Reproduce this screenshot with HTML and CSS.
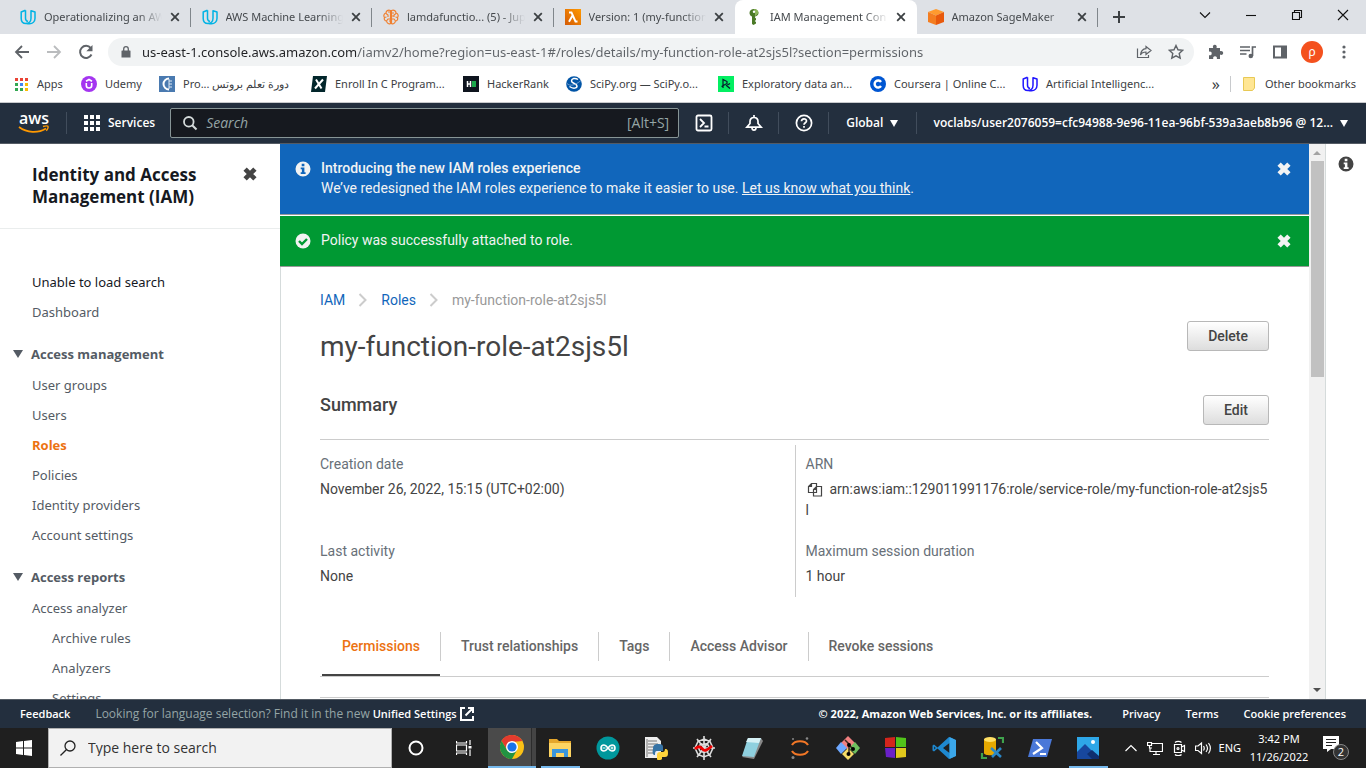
FILE: index.html
```html
<!DOCTYPE html>
<html lang="en">
<head>
<meta charset="utf-8">
<meta name="viewport" content="width=device-width, initial-scale=1">
<title>IAM Management Console</title>
<link rel="stylesheet" href="styles.css">
</head>
<body>
<svg class="defs" aria-hidden="true">
  <symbol id="x-thin" viewBox="0 0 10 10"><path d="M1.2 1.2l7.6 7.6M8.8 1.2L1.2 8.8" stroke="currentColor" stroke-width="1.8" fill="none"/></symbol>
  <symbol id="x-heavy" viewBox="0 0 12 12"><path d="M1.8 1.8l8.4 8.4M10.2 1.8l-8.4 8.4" stroke="currentColor" stroke-width="4" fill="none"/></symbol>
  <symbol id="udacity" viewBox="0 0 16 16"><path d="M5.500 1.200L1.200 3v6.500c0 3 2 5 4.800 5 3 0 5-2.200 5-5.200V1.800l4 1.200v6.200c0 3.300-2.500 5.500-5.500 5.500-1.200 0-2.500-.200-3.500-.500M5.500 1.200v8c0 1.500.800 2.800 2.500 3.300" fill="none" stroke="currentColor" stroke-width="1.500" stroke-linejoin="round"/></symbol>
  <symbol id="info" viewBox="0 0 16 16"><path fill="currentColor" fill-rule="evenodd" d="M8 .500a7.500 7.500 0 1 0 0 15 7.500 7.500 0 0 0 0-15zM6.700 2.800h2.700v2.400H6.700zM5.700 6.500h3.700v4.700h1.200V13H5.700v-1.800h1.200V8.200H5.700z"/></symbol>
  <symbol id="chev" viewBox="0 0 10 16"><path d="M1.500 2l6 6-6 6" fill="none" stroke="#ccc" stroke-width="2"/></symbol>
</svg>

<header class="tabstrip">
  <div class="tabs" role="tablist">
    <div class="tab" role="tab"><svg class="i16 cyan"><use href="#udacity"/></svg><span class="tab-title">Operationalizing an AWS</span><button class="tab-x" aria-label="Close tab"><svg><use href="#x-thin"/></svg></button></div>
    <div class="tab" role="tab"><svg class="i16 cyan"><use href="#udacity"/></svg><span class="tab-title">AWS Machine Learning</span><button class="tab-x" aria-label="Close tab"><svg><use href="#x-thin"/></svg></button></div>
    <div class="tab" role="tab"><svg class="i16" viewBox="0 0 16 16" fill="none" stroke="#f08030" stroke-width="1.200"><path d="M7.500 1.500C5 .500 3 2 3 4 .800 4.500.300 7 1.500 8.500.800 10.500 2 12 3.500 12c.500 2.500 2.500 3.500 4 2.500zM8.500 1.500C11 .500 13 2 13 4c2.200.500 2.700 3 1.500 4.500.700 2-.500 3.500-2 3.500-.500 2.500-2.500 3.500-4 2.500zM3 4.500l2 1.500v2M1.500 8.500l2-.500M3.500 12l1.500-2h2.500M5 3h2M13 4.500L11 6v2M14.500 8.500l-2-.500M12.500 12L11 10H8.500M9 4h2M6 12h1.500M8.500 7h2"/></svg><span class="tab-title">lamdafunctio... (5) - Jup</span><button class="tab-x" aria-label="Close tab"><svg><use href="#x-thin"/></svg></button></div>
    <div class="tab last" role="tab"><svg class="i16" viewBox="0 0 16 16"><defs><linearGradient id="lg" x1="0" y1="1" x2="1" y2="0"><stop offset="0" stop-color="#d45b07"/><stop offset="1" stop-color="#ff9900"/></linearGradient></defs><path fill="url(#lg)" d="M0 0h16v16H0z"/><path d="M4 3.500h2.500l4 9h2M7.500 6.500L4 12.800" fill="none" stroke="#fff" stroke-width="1.900"/></svg><span class="tab-title">Version: 1 (my-function</span><button class="tab-x" aria-label="Close tab"><svg><use href="#x-thin"/></svg></button></div>
    <div class="tab active" role="tab" aria-selected="true"><svg class="i16" viewBox="0 0 16 16"><path fill="#4b7a27" d="M8 0C5.500 0 3.500 1.500 3.500 4c0 1.500 1 3 2.500 3.500V15l1.500 1L10 14.500v-1.500L8.700 12 10 11V9.500l-1-1v-1C11 7 12.500 6 12.500 4S10.500 0 8 0z"/><path fill="#8cb65a" d="M8 0c2.500 0 4.500 1.500 4.500 4L9 7.500V3z"/><circle cx="8" cy="2.700" r="1.200" fill="#fff"/></svg><span class="tab-title">IAM Management Con</span><button class="tab-x" aria-label="Close tab"><svg><use href="#x-thin"/></svg></button></div>
    <div class="tab" role="tab"><svg class="i16" viewBox="0 0 16 16"><path fill="#ff9a2e" d="M8 0l8 3-8 3.500L0 3z"/><path fill="#f47d20" d="M0 3l8 3.500V16l-8-3z"/><path fill="#e8590c" d="M16 3L8 6.500V16l8-3z"/></svg><span class="tab-title">Amazon SageMaker</span><button class="tab-x" aria-label="Close tab"><svg><use href="#x-thin"/></svg></button></div>
  </div>
  <div class="window-side">
    <button class="new-tab" aria-label="New tab"><svg class="i16" viewBox="0 0 16 16"><path d="M8 2v12M2 8h12" stroke="#3c4043" stroke-width="2"/></svg></button>
    <div class="window-controls">
      <button aria-label="Search tabs"><svg class="i12" viewBox="0 0 12 12"><path d="M1 3.500l5 5 5-5"/></svg></button>
      <button aria-label="Minimize"><svg class="i12" viewBox="0 0 12 12"><path d="M1 6.500h10"/></svg></button>
      <button aria-label="Restore"><svg class="i12" viewBox="0 0 12 12"><path d="M1.500 3.500h7v7h-7zM3.500 3.500v-2h7v7h-2"/></svg></button>
      <button aria-label="Close"><svg class="i12" viewBox="0 0 12 12"><path d="M1 1l10 10M11 1L1 11"/></svg></button>
    </div>
  </div>
</header>

<div class="toolbar">
  <button aria-label="Back"><svg class="i16" viewBox="0 0 16 16"><path d="M15 8H2M8 2L2 8l6 6" fill="none" stroke="#5f6368" stroke-width="1.800"/></svg></button>
  <button aria-label="Forward"><svg class="i16" viewBox="0 0 16 16"><path d="M1 8h13M8 2l6 6-6 6" fill="none" stroke="#babcbe" stroke-width="1.800"/></svg></button>
  <button aria-label="Reload"><svg class="i16" viewBox="0 0 16 16"><path d="M13.500 10.500a6 6 0 1 1-.800-6.500" fill="none" stroke="#5f6368" stroke-width="2"/><path d="M14.500 1v6.200H8.300z" fill="#5f6368"/></svg></button>
  <div class="omnibox">
    <svg class="i12" viewBox="0 0 12 12"><path d="M2 4.500h8a.500.500 0 0 1 .500.500v6.500h-9V5a.500.500 0 0 1 .500-.500z" fill="#5f6368"/><path d="M3.700 5V3a2.300 2.300 0 0 1 4.600 0v2" fill="none" stroke="#5f6368" stroke-width="1.300"/></svg>
    <input class="url" aria-label="Address" value="us-east-1.console.aws.amazon.com/iamv2/home?region=us-east-1#/roles/details/my-function-role-at2sjs5l?section=permissions">
    <button aria-label="Share"><svg class="i16" viewBox="0 0 16 16" fill="none" stroke="#5f6368" stroke-width="1.200"><path d="M1.500 4.500v9h11v-2.500M10 2.500l5 4-5 4V8C7.500 8 5.500 9 4.500 11c.300-3 2-6 5.500-6.300z"/></svg></button>
    <button aria-label="Bookmark"><svg class="i16" viewBox="0 0 16 16"><path d="M8 1.500l2 4.300 4.700.500-3.500 3.200 1 4.700L8 11.800l-4.200 2.400 1-4.700L1.300 6.300 6 5.800z" fill="none" stroke="#5f6368" stroke-width="1.400"/></svg></button>
  </div>
  <button aria-label="Extensions"><svg class="i16" viewBox="0 0 16 16"><path d="M1 4h4.200c-.800-1.500 0-3.200 1.600-3.200S9.200 2.500 8.500 4H12v3.300c1.500-.700 3.200 0 3.200 1.700s-1.700 2.300-3.200 1.600V15H8.800c.600-1.400-.300-2.700-1.800-2.700S4.700 13.600 5.300 15H1v-3.800c1.500.500 2.700-.400 2.700-1.800S2.500 7.200 1 7.800z" fill="#5f6368"/></svg></button>
  <button aria-label="Media"><svg class="i16" viewBox="0 0 16 16"><path d="M0 3h10M0 6.500h10M0 10h6.500M12.500 12V3H16" fill="none" stroke="#5f6368" stroke-width="1.700"/><circle cx="10.800" cy="12" r="2.300" fill="#5f6368"/></svg></button>
  <button aria-label="Side panel"><svg class="i16" viewBox="0 0 16 16"><path d="M1 1.500h14v13H1zM3 3.500v9h6v-9z" fill="#5f6368" fill-rule="evenodd"/></svg></button>
  <button class="avatar" aria-label="Profile">ρ</button>
  <button aria-label="Menu"><svg class="i16" viewBox="0 0 16 16" fill="#5f6368"><circle cx="8" cy="3" r="1.600"/><circle cx="8" cy="8" r="1.600"/><circle cx="8" cy="13" r="1.600"/></svg></button>
</div>

<nav class="bookmarks" aria-label="Bookmarks">
  <a href="#" class="bm apps"><svg class="i16" viewBox="0 0 16 16"><path fill="#ea4335" d="M2 2h3v3H2zM7 2h3v3H7zM12 2h3v3h-3z"/><path fill="#34a853" d="M2 7h3v3H2zM2 12h3v3H2z"/><path fill="#4285f4" d="M7 7h3v3H7z"/><path fill="#34a853" d="M7 12h3v3H7z"/><path fill="#fbbc04" d="M12 7h3v3h-3zM12 12h3v3h-3z"/></svg><span>Apps</span></a>
  <a href="#" class="bm udemy"><svg class="i16" viewBox="0 0 16 16"><circle cx="8" cy="8" r="8" fill="#a435f0"/><path d="M5.300 7v2.500a2.700 2.500 0 0 0 5.400 0V7M5 5.300L8 3.500l3 1.800" fill="none" stroke="#fff" stroke-width="1.600"/></svg><span>Udemy</span></a>
  <a href="#" class="bm"><svg class="i16" viewBox="0 0 16 16"><path fill="#4a7ab0" d="M0 0h16v16H0z"/><path d="M10 2.500a5.500 5.500 0 1 0 0 11" fill="none" stroke="#fff" stroke-width="2"/><path d="M10 3v10M10 5h3M10 8h3M10 11h3" stroke="#dbe7f3"/></svg><span dir="ltr">Pro... دورة تعلم بروتس</span></a>
  <a href="#" class="bm"><svg class="i16" viewBox="0 0 16 16"><path fill="#02262b" d="M2 0h14l-2 16H0z"/><path d="M5 3.500l5.500 9M12 3.500l-8 9" stroke="#fff" stroke-width="2"/></svg><span>Enroll In C Program...</span></a>
  <a href="#" class="bm short"><svg class="i16" viewBox="0 0 16 16"><path fill="#0e141e" d="M0 0h16v16H0z"/><path d="M4.500 5v6M7.500 5v6M4.500 8h3" stroke="#fff" stroke-width="1.500"/><path fill="#1ba94c" d="M9 5h4v6H9z"/></svg><span>HackerRank</span></a>
  <a href="#" class="bm"><svg class="i16" viewBox="0 0 16 16"><circle cx="8" cy="8" r="7.800" fill="#0054a6"/><path d="M12 3.500C9 1.500 5.500 2.500 5.500 5S11 7.500 11 10s-4 3-7.500.500" fill="none" stroke="#fff" stroke-width="1.500"/><path d="M1 7.500c3 3 8 2 14-3" fill="none" stroke="#8caed5" stroke-width=".8"/></svg><span>SciPy.org — SciPy.o...</span></a>
  <a href="#" class="bm"><svg class="i16" viewBox="0 0 16 16"><path fill="#03ef62" d="M0 0h16v16H0z"/><path d="M5 12V3.500l4 2v2L3.500 10.500M12 7.500l-3.500 2 3.500 3" fill="none" stroke="#05192d" stroke-width="1.200"/></svg><span>Exploratory data an...</span></a>
  <a href="#" class="bm"><svg class="i16" viewBox="0 0 16 16"><circle cx="8" cy="8" r="8" fill="#0056d2"/><path d="M11 6a3.500 3.500 0 1 0 0 4" fill="none" stroke="#fff" stroke-width="2.400"/></svg><span>Coursera | Online C...</span></a>
  <a href="#" class="bm"><svg class="i16 indigo"><use href="#udacity"/></svg><span>Artificial Intelligenc...</span></a>
  <button class="more" aria-label="More bookmarks">»</button>
  <a href="#" class="bm other"><svg class="i16" viewBox="0 0 16 16"><path d="M2.500 1.500h11v10.500l-2 2.500h-9z" fill="#ffe694" stroke="#e8c955"/></svg><span>Other bookmarks</span></a>
</nav>

<header class="aws">
  <a href="#" class="logo" aria-label="AWS home"><svg width="34" height="24" viewBox="0 0 34 24"><text x="2" y="13" class="logo-text">aws</text><path d="M2 16c8 6 19 6.500 27 1.500" fill="none" stroke="#f90" stroke-width="1.800"/><path d="M26 15.500c2-.600 4-.800 4.800-.300.600.800-.200 3-1.500 4.500" fill="none" stroke="#f90" stroke-width="1.400"/></svg></a>
  <button class="services"><svg class="i16" viewBox="0 0 16 16"><path fill="#fff" d="M0 0h4v4H0zM6 0h4v4H6zM12 0h4v4h-4zM0 6h4v4H0zM6 6h4v4H6zM12 6h4v4h-4zM0 12h4v4H0zM6 12h4v4H6zM12 12h4v4h-4z"/></svg>Services</button>
  <label class="aws-search"><svg class="i16" viewBox="0 0 16 16"><circle cx="6.800" cy="6.800" r="4.800" fill="none" stroke="#d5dbdb" stroke-width="1.800"/><path d="M10.200 10.200l4.300 4.300" stroke="#d5dbdb" stroke-width="2"/></svg><input type="search" placeholder="Search" aria-label="Search"><span>[Alt+S]</span></label>
  <div class="aws-icons">
    <button aria-label="CloudShell"><svg class="i18" viewBox="0 0 18 18" fill="none" stroke="#fff" stroke-width="1.800"><rect x="1.500" y="1.500" width="15" height="15" rx="1.500"/><path d="M5 5l4 4-4 4M9.500 12.500h4"/></svg></button>
    <button aria-label="Notifications"><svg class="i18" viewBox="0 0 18 18" fill="none" stroke="#fff" stroke-width="1.700"><path d="M1.800 13.200h14.400L13 9.500V7.500c0-2.500-1.500-4-4-4s-4 1.500-4 4v2zM9 3.500V1M7 14c.200 2.800 3.800 2.800 4 0"/></svg></button>
    <button aria-label="Help"><svg class="i18" viewBox="0 0 18 18" fill="none" stroke="#fff" stroke-width="1.700"><circle cx="9" cy="9" r="7.600"/><path d="M6.500 7.300C6.500 4 11.500 4 11.500 7c0 1.800-2.500 1.700-2.500 3.700M9 12v1.700"/></svg></button>
  </div>
  <button class="region">Global <span class="caret"></span></button>
  <button class="account"><span>voclabs/user2076059=cfc94988-9e96-11ea-96bf-539a3aeb8b96 @ 12...</span> <span class="caret"></span></button>
</header>

<div class="body">
  <aside class="sidebar">
    <div class="side-head"><h2>Identity and Access Management (IAM)</h2><button aria-label="Close navigation"><svg class="i14"><use href="#x-heavy"/></svg></button></div>
    <nav class="side-nav" aria-label="IAM">
      <p class="side-note">Unable to load search</p>
      <a href="#">Dashboard</a>
      <button class="section" aria-expanded="true"><span class="tri"></span>Access management</button>
      <a href="#">User groups</a>
      <a href="#">Users</a>
      <a href="#" class="current" aria-current="page">Roles</a>
      <a href="#">Policies</a>
      <a href="#">Identity providers</a>
      <a href="#">Account settings</a>
      <button class="section" aria-expanded="true"><span class="tri"></span>Access reports</button>
      <a href="#">Access analyzer</a>
      <a href="#" class="sub">Archive rules</a>
      <a href="#" class="sub">Analyzers</a>
      <a href="#" class="sub">Settings</a>
    </nav>
  </aside>

  <main class="main">
    <div class="flash blue">
      <svg class="i16"><use href="#info"/></svg>
      <div class="flash-text"><strong>Introducing the new IAM roles experience</strong><p>We’ve redesigned the IAM roles experience to make it easier to use. <a href="#">Let us know what you think</a>.</p></div>
      <button aria-label="Dismiss"><svg class="i14"><use href="#x-heavy"/></svg></button>
    </div>
    <div class="flash green">
      <svg class="i16" viewBox="0 0 16 16"><circle cx="8" cy="8" r="7.500" fill="#f2f3f3"/><path d="M4 8l3 3 5-5" fill="none" stroke="#093" stroke-width="2.400"/></svg>
      <div class="flash-text"><p>Policy was successfully attached to role.</p></div>
      <button aria-label="Dismiss"><svg class="i14"><use href="#x-heavy"/></svg></button>
    </div>
    <div class="page">
      <nav class="crumbs" aria-label="Breadcrumb"><a href="#">IAM</a><svg><use href="#chev"/></svg><a href="#">Roles</a><svg><use href="#chev"/></svg><span>my-function-role-at2sjs5l</span></nav>
      <div class="title-row"><h1>my-function-role-at2sjs5l</h1><button class="btn">Delete</button></div>
      <div class="summary-row"><h2>Summary</h2><button class="btn">Edit</button></div>
      <div class="summary">
        <dl>
          <div><dt>Creation date</dt><dd>November 26, 2022, 15:15 (UTC+02:00)</dd></div>
          <div><dt>Last activity</dt><dd>None</dd></div>
        </dl>
        <dl>
          <div><dt>ARN</dt><dd class="arn"><button aria-label="Copy ARN"><svg class="i16" viewBox="0 0 16 16" fill="#fff" stroke="#444" stroke-width="1.200"><path d="M4.500 1.500h5v9h-8v-6zM4.500 1.500v3h-3M9.500 4.500h5v9.500h-8V7.500zM9.500 4.500v3h-3"/></svg></button>arn:aws:iam::129011991176:role/service-role/my-function-role-at2sjs5l</dd></div>
          <div><dt>Maximum session duration</dt><dd>1 hour</dd></div>
        </dl>
      </div>
      <div class="role-tabs" role="tablist">
        <button role="tab" aria-selected="true" class="on">Permissions</button>
        <button role="tab">Trust relationships</button>
        <button role="tab">Tags</button>
        <button role="tab">Access Advisor</button>
        <button role="tab">Revoke sessions</button>
      </div>
      <div class="panel"></div>
    </div>
  </main>
  <div class="scrollbar" aria-hidden="true"><span class="up"></span><span class="thumb"></span><span class="down"></span></div>
  <aside class="rail"><button aria-label="Help panel"><svg class="i16"><use href="#info"/></svg></button></aside>
</div>

<footer class="footer">
  <a href="#">Feedback</a>
  <p class="lang">Looking for language selection? Find it in the new <a href="#">Unified Settings<svg class="i14" viewBox="0 0 14 14"><path d="M5 1H1v12h12V9M8 1h5v5M13 1L5.500 8.500" fill="none" stroke="#fff" stroke-width="2"/></svg></a></p>
  <span class="copy">© 2022, Amazon Web Services, Inc. or its affiliates.</span>
  <a href="#">Privacy</a><a href="#">Terms</a><a href="#">Cookie preferences</a>
</footer>

<div class="taskbar">
  <button class="start" aria-label="Start"><svg class="i16" viewBox="0 0 16 16"><path fill="#fff" d="M0 2l7-1v6.500H0zM8 .900L16 0v7.500H8zM0 8.500h7V15l-7-1zM8 8.500h8V16l-8-1z"/></svg></button>
  <label class="task-search"><svg class="i16" viewBox="0 0 16 16" fill="none" stroke="#222" stroke-width="1.300"><circle cx="10" cy="6" r="5"/><path d="M6.300 9.700L.500 15.500"/></svg><input type="search" placeholder="Type here to search" aria-label="Type here to search"></label>
  <div class="task-apps">
    <button aria-label="Cortana"><svg class="i16" viewBox="0 0 16 16"><circle cx="8" cy="8" r="6.500" fill="none" stroke="#fff" stroke-width="2"/></svg></button>
    <button aria-label="Task view"><svg class="i16" viewBox="0 0 16 16" fill="none" stroke="#fff" stroke-width="1.200"><path d="M.500 5h10v6H.500zM.500 1v2h10V1M.500 15v-2h10v2M14 0v5M14 9.500V16"/><path fill="#fff" stroke="none" d="M12.500 6h3v2.500h-3z"/></svg></button>
    <button class="focus" aria-label="Chrome"><svg class="i24" viewBox="0 0 24 24"><circle cx="12" cy="12" r="12" fill="#fbc116"/><path fill="#e33b2e" d="M1.600 6A12 12 0 0 1 22.400 6L12 7 7 15z"/><path fill="#229342" d="M1.600 6A12 12 0 0 0 12 24l5-9-5 2-5-2z"/><circle cx="12" cy="12" r="6" fill="#fff"/><circle cx="12" cy="12" r="4.600" fill="#1a73e8"/></svg></button>
    <button class="open" aria-label="File Explorer"><svg class="i24" viewBox="0 0 24 24"><path fill="#e5a62b" d="M1 3h8l2 2h12v6H1z"/><path fill="#fdd462" d="M1 7h22v14H1z"/><path fill="#3a96dd" d="M4 21v-8h16v8h-4v-4H8v4z"/></svg></button>
    <button aria-label="Arduino"><svg class="i24" viewBox="0 0 24 24"><circle cx="12" cy="12" r="11.500" fill="#00979c"/><path d="M12 12c-1.500-2-2.500-3-4-3a3 3 0 0 0 0 6c1.500 0 2.500-1 4-3s2.500-3 4-3a3 3 0 0 1 0 6c-1.500 0-2.500-1-4-3z" fill="none" stroke="#fff" stroke-width="1.600"/><path d="M6.500 12h3M14.500 12h3M16 10.500v3" stroke="#fff"/></svg></button>
    <button aria-label="Python IDLE"><svg class="i24" viewBox="0 0 24 24"><path fill="#eee" d="M1 1h12l4 4v17H1z"/><path d="M3 3v18M4 5h9M4 8h10M4 11h8M4 14h7M4 17h5" stroke="#777"/><path fill="#3673a5" d="M9 13c0-5 3-5 6-5s4 1 4 3v4h-6c-2 0-2 2-2 4-2 0-3-2-2-6z"/><path fill="#ffd43b" d="M13 23v-4c0-2 1-3 3-3h3c1 0 2-1 2-3 3 0 3 2 3 4 0 3-1 4-3 4h-3v2c0 1-5 2-5 0z"/></svg></button>
    <button aria-label="Spyder"><svg class="i24" viewBox="0 0 24 24"><g fill="none" stroke="#ddd" stroke-width="1.600"><path d="M12 0v24M5 3l14 18M19 3L5 21M1 12h22M12 3l6 2.500L21 12l-3 6.500L12 21l-6-2.500L3 12l3-6.500zM12 7.500l4 1.500 1.500 3-1.500 3-4 1.500L8 15l-1.500-3L8 9z"/></g><path d="M3 13c3-3 5-3 7.500 0 2 3 4.500 1 9.500-3" fill="none" stroke="#e00" stroke-width="2.800"/></svg></button>
    <button aria-label="Notepad"><svg class="i24" viewBox="0 0 24 24"><path fill="#888" d="M2 21l12 2 9-18-2-3z"/><path fill="#8fd0df" d="M8 2h13l-7 19-12-1z"/><path fill="#d5f0f5" d="M8 2h13l-2 5-13-1z"/></svg></button>
    <button aria-label="Jupyter"><svg class="i24" viewBox="0 0 24 24"><path d="M4 9c3-5 13-5 16 0M4 15c3 5 13 5 16 0" fill="none" stroke="#f37726" stroke-width="2.200"/><circle cx="5" cy="3" r="1" fill="#888"/><circle cx="19" cy="2.500" r="1.300" fill="#888"/><circle cx="5" cy="21.500" r="1.500" fill="#888"/></svg></button>
    <button aria-label="Git"><svg class="i24" viewBox="0 0 24 24"><path fill="#f28080" d="M12 0l7 7-7 7-7-7z"/><path fill="#6ea8ff" d="M5 6l6 6-6 6-5-6z"/><path fill="#6fbf5f" d="M19 6l5 6-5 6-6-6z"/><path fill="#f5dc68" d="M12 12l6 6-6 6-6-6z"/><path d="M9 4l4 4v10M13 9l4 4" fill="none" stroke="#3b2a20" stroke-width="1.500"/><circle cx="13" cy="9" r="2"/><circle cx="17" cy="13" r="2"/><circle cx="12.500" cy="18" r="2"/></svg></button>
    <button aria-label="Blocks"><svg class="i24" viewBox="0 0 24 24"><path fill="#d4251c" d="M1 2l10-1v10H1z"/><path fill="#52c41a" d="M12 1l10 1v9H12z"/><path fill="#6a20c8" d="M1 12h10v10L2 21z"/><path fill="#e0c81c" d="M12 12h10v9l-10 1z"/></svg></button>
    <button aria-label="VS Code"><svg class="i24" viewBox="0 0 24 24"><path fill="#1e88cf" d="M17 1L5.500 11.500 2 8.500.500 9.500v5l1.500 1 3.500-3L17 23l6.500-3V4z"/><path fill="#1f1f1f" d="M17.500 7v10L11 12zM2.200 10.500v3l1.500-1.500z"/><path fill="#3ba7ea" d="M17.500 1L24 4v16l-6.500 3z"/></svg></button>
    <button aria-label="SQL tools"><svg class="i24" viewBox="0 0 24 24"><path fill="#e5a800" d="M4 3h12v14c0 3-12 3-12 0z"/><ellipse cx="10" cy="3.500" rx="6" ry="2.500" fill="#ffdf63"/><path d="M18 2h5v5M2 17v5h5" fill="none" stroke="#3fa34d" stroke-width="2.200"/><path d="M11 12l10 9M21 12l-9 9" stroke="#2b88c8" stroke-width="2.600"/></svg></button>
    <button aria-label="PowerShell"><svg class="i24" viewBox="0 0 24 24"><path fill="#4a78d8" d="M5 3h19l-5 18H0z"/><path d="M8 6l6 6-9 6M12 18h6" fill="none" stroke="#fff" stroke-width="2.200"/></svg></button>
    <button class="open" aria-label="Photos"><svg class="i24" viewBox="0 0 24 24"><path fill="#2ea7e8" d="M1 1h22v22H1z"/><path fill="#17479e" d="M1 16L9 8l14 14v1H1z"/><path fill="#0f2f6e" d="M11 18l5-4 7 6v3h-7z"/><circle cx="17" cy="6" r="2" fill="#fff"/></svg></button>
  </div>
  <div class="tray">
    <button aria-label="Show hidden icons"><svg class="i16" viewBox="0 0 16 16"><path d="M2.500 11L8 5.500l5.500 5.500"/></svg></button>
    <button aria-label="Network"><svg class="i16" viewBox="0 0 16 16"><path d="M5 3.500h10.500v8H3V8M9 11.500v3M6 14.500h7M.500 2.500h4v3h-4zM2.500 5.500V8H5"/></svg></button>
    <button aria-label="Camera"><svg class="i16" viewBox="0 0 16 16"><path d="M3.500 4.500h7v8h-7zM10.500 7l3-1.500v6l-3-1.500M4 2.500C5.500 1 9 1 10.500 2.500M4 14.500c1.500 1.500 5 1.500 6.500 0"/><circle cx="7" cy="8.500" r="1"/></svg></button>
    <button aria-label="Volume"><svg class="i16" viewBox="0 0 16 16"><path d="M.500 6h2.500l3.500-3v10.500L3 10.500H.500zM8.500 6c1 1.500 1 3 0 4.500M11 4.500c2 2.500 2 5 0 7.500M13.500 3c2.500 3.500 2.500 7 0 10.500"/></svg></button>
    <span class="lang-code">ENG</span>
    <time datetime="2022-11-26T15:42">3:42 PM<br>11/26/2022</time>
    <button class="notes" aria-label="Notifications"><svg class="i16" viewBox="0 0 16 16"><path d="M0 0h16v13H8l-4 3v-3H0z" class="bubble"/><path d="M3 3.500h10M3 6.500h10M3 9.500h6" class="lines"/></svg><span class="badge">2</span></button>
  </div>
</div>
</body>
</html>
```
FILE: styles.css
```css
* { box-sizing: border-box; }
body {
  margin: 0; height: 100vh; overflow: hidden; display: flex; flex-direction: column;
  font: 12px/16px "Open Sans", "Noto Sans", sans-serif; color: #444; background: #fff;
}
h1, h2, p, dl, dd { margin: 0; }
a { color: inherit; text-decoration: none; }
button { background: none; border: 0; padding: 0; font: inherit; color: inherit; display: flex; align-items: center; justify-content: center; }
input { font: inherit; color: inherit; border: 0; outline: 0; background: none; padding: 0; min-width: 0; flex: 1; }
svg { flex: none; display: block; }
.defs { position: absolute; width: 0; height: 0; }
.i12 { width: 12px; height: 12px; }
.i14 { width: 14px; height: 14px; }
.i16 { width: 16px; height: 16px; }
.i18 { width: 18px; height: 18px; }
.i24 { width: 24px; height: 24px; }
.cyan { color: #02b3e4; }
.indigo { color: #2015ff; }

/* Browser tabs */
.tabstrip, .toolbar, .bookmarks { font-family: "Noto Sans", sans-serif; font-size: 11px; }
.tabstrip { flex: none; display: flex; height: 34px; background: #dee1e6; padding-left: 9px; }
.tabs { flex: 1; display: flex; min-width: 0; }
.tab { flex: 1 1 0; min-width: 0; display: flex; align-items: center; gap: 8px; padding: 0 11px; position: relative; color: #45494d; }
.tab::after { content: ""; position: absolute; right: 0; top: 8px; height: 19px; width: 1px; background: #80868b; }
.tab.last::after, .tab.active::after { display: none; }
.tab-title { flex: 1; overflow: hidden; white-space: nowrap; -webkit-mask-image: linear-gradient(90deg, #000 calc(100% - 24px), transparent); mask-image: linear-gradient(90deg, #000 calc(100% - 24px), transparent); }
.tab-x { color: #3c4043; }
.tab-x svg { width: 10px; height: 10px; }
.tab.active { background: #fff; border-radius: 8px 8px 0 0; }
.window-side { flex: none; width: 268px; display: flex; justify-content: space-between; }
.new-tab { width: 42px; }
.window-controls { display: flex; height: 29px; }
.window-controls button { width: 46px; }
.window-controls path { fill: none; stroke: #111; stroke-width: 1.1; }

/* Address bar */
.toolbar { flex: none; display: flex; align-items: center; height: 36px; gap: 16px; padding: 0 14px; }
.toolbar > .omnibox { margin-left: -2px; margin-right: -2px; }
.omnibox { flex: 1; display: flex; align-items: center; height: 28px; border-radius: 14px; background: #f1f3f4; padding: 0 10px 0 12px; gap: 16px; }
.omnibox > .i12 { margin-right: -6px; }
.url { font-size: 13px; height: 24px; color: transparent; background: linear-gradient(90deg, #202124 214px, #5f6368 214px); -webkit-background-clip: text; background-clip: text; }
.avatar { width: 22px; height: 22px; border-radius: 50%; background: #f4511e; color: #fff; margin: 0 -3px; font-size: 12px; }

/* Bookmarks */
.bookmarks { flex: none; display: flex; align-items: center; height: 33px; padding: 0 10px 4px 13px; gap: 16px; border-bottom: 1px solid #c8cacd; color: #3c4043; }
.bm { display: flex; align-items: center; gap: 8px; white-space: nowrap; flex: 0 0 136px; }
.bm span { min-width: 0; }
.bm.apps { flex-basis: 52px; }
.bm.udemy { flex-basis: 62px; }
.bm.short { flex-basis: 87px; }
.more { margin-left: auto; font-size: 16px; margin-right: -6px; }
.bm.other { flex: none; border-left: 1px solid #c8cacd; padding-left: 10px; }

/* Console header */
.aws { flex: none; display: flex; align-items: center; height: 41px; background: #232f3e; color: #fff; font-weight: 600; border-bottom: 1px solid #545b64; }
.logo { width: 67px; padding-left: 17px; height: 22px; display: flex; align-items: center; border-right: 1px solid #414d5c; }
.logo-text { font: 600 16px "Open Sans", sans-serif; fill: #fff; }
.services { gap: 8px; padding: 0 15px 0 17px; }
.aws-search { flex: 0 0 509px; display: flex; align-items: center; height: 30px; gap: 8px; padding: 0 9px 0 11px; background: #16191f; border: 1px solid #879596; border-radius: 2px; font-size: 14px; font-weight: 400; color: #95a5a6; }
.aws-search input { font-style: italic; }
.aws-search input::placeholder, .task-search input::placeholder { color: inherit; opacity: 1; }
.aws-icons { display: flex; }
.aws-icons button { width: 50px; height: 22px; border-right: 1px solid #414d5c; }
.aws-icons button:first-child { border-right-color: #414d5c; }
.caret { border: 4px solid transparent; border-top: 7px solid #fff; border-bottom: 0; margin-left: 7px; }
.region { height: 22px; padding: 0 18px 0 17px; border-right: 1px solid #414d5c; }
.account { margin-left: auto; padding: 0 18px 0 0; white-space: nowrap; }

/* Console body */
.body { flex: 1; min-height: 0; display: flex; overflow: hidden; }
.sidebar { flex: none; width: 280px; overflow: hidden; color: #545b64; font-family: "Noto Sans", sans-serif; font-size: 13px; }
.side-head { display: flex; align-items: flex-start; justify-content: space-between; padding: 20px 23px 20px 32px; border-bottom: 1px solid #eaeded; color: #444; }
.side-head h2 { width: 176px; font: 700 17px/22px "Open Sans", sans-serif; color: #16191f; }
.side-head button { padding-top: 3px; }
.side-nav { display: flex; flex-direction: column; padding: 38px 20px 0 32px; line-height: 30px; }
.side-note { color: #16191f; }
.side-nav .current { color: #ec7211; font-family: "Open Sans", sans-serif; font-weight: 700; }
.side-nav .sub { padding-left: 20px; }
.section { justify-content: flex-start; gap: 8px; margin: 12px 0 1px -19px; font-family: "Open Sans", sans-serif; font-weight: 700; line-height: 30px; }
.tri { border: 5px solid transparent; border-top: 8px solid #545b64; border-bottom: 0; }
.main { flex: 1; min-width: 0; overflow: hidden; font: 14px/20px Roboto, sans-serif; }
.flash { display: flex; align-items: flex-start; gap: 10px; padding: 14px 18px 16px 15px; color: #f2f3f3; border-bottom: 1px solid #999; }
.flash svg { margin-top: 3px; }
.flash button svg { margin-top: 4px; }
.flash-text { flex: 1; }
.flash strong { font-weight: 500; display: block; }
.flash a { text-decoration: underline; }
.blue { background: #1166bb; margin-bottom: 1px; }
.green { background: #009933; }
.page { padding: 23px 40px 0 39px; border-left: 1px solid #d5dbdb; }
.crumbs { display: flex; align-items: center; color: #999; }
.crumbs svg { width: 10px; height: 16px; margin: 0 13px; }
.crumbs a { color: #1166bb; }
.title-row, .summary-row { display: flex; justify-content: space-between; align-items: flex-start; }
h1 { font-size: 28px; line-height: 36px; font-weight: 400; padding-top: 8px; }
.btn { height: 30px; padding: 0 20px; border: 1px solid #b8b8b8; border-radius: 3px; background: linear-gradient(#fff, #ddd); font-weight: 500; color: #444; }
.title-row { padding-top: 11px; height: 85px; }
.summary-row { padding-bottom: 14px; border-bottom: 1px solid #ccc; }
.summary-row h2 { font-size: 18px; line-height: 20px; font-weight: 500; }
.summary { display: grid; grid-template-columns: 1fr 1fr; margin-top: 5px; }
.summary dl { display: grid; grid-template-rows: 87px 65px; padding-top: 9px; height: 152px; }
.summary dl + dl { border-left: 1px solid #ccc; padding-left: 10px; }
dt { color: #687078; padding-bottom: 5px; }
.arn { line-height: 21px; word-break: break-all; }
.arn button { display: inline-block; vertical-align: -4px; margin: 0 7px 0 1px; }
.role-tabs { display: flex; margin-top: 35px; border-bottom: 1px solid #ccc; font-weight: 500; color: #666; height: 45px; padding-left: 2px; }
.role-tabs button { position: relative; align-items: flex-start; padding: 4px 20px 0; border: 0; }
.role-tabs button + button { padding-left: 21px; }
.role-tabs button:not(:last-child)::after { content: ""; position: absolute; right: -1px; top: 0; width: 1px; height: 29px; background: #ccc; }
.role-tabs .on { color: #ec7211; border-bottom: 2px solid #444; }
.panel { margin-top: 20px; border-top: 1px solid #ccc; height: 300px; }
.scrollbar { flex: none; width: 17px; display: flex; flex-direction: column; align-items: center; background: #f1f1f1; border-right: 1px solid #d5dbdb; }
.up { border: 4px solid transparent; border-top: 0; border-bottom: 4px solid #a3a3a3; margin: 7px 0 6px; }
.thumb { width: 13px; height: 39%; background: #c1c1c1; }
.down { margin: auto 0 7px; border: 4px solid transparent; border-bottom: 0; border-top: 4px solid #505050; }
.rail { flex: none; width: 40px; display: flex; align-items: flex-start; justify-content: center; padding-top: 12px; color: #444; }

/* Console footer */
.footer { flex: none; display: flex; align-items: center; gap: 25px; height: 29px; padding: 0 20px; background: #232f3e; border-top: 1px solid #545b64; color: #fff; font-weight: 600; font-size: 11px; white-space: nowrap; }
.lang { display: flex; gap: 3px; color: #95a5a6; font-weight: 400; font-size: 12px; }
.lang a { display: flex; align-items: center; gap: 3px; color: #fff; font-weight: 600; font-size: 11px; }
.copy { margin-left: auto; font-weight: 700; margin-right: 5px; }

/* Desktop taskbar */
.taskbar { flex: none; display: flex; height: 40px; background: #1f1f1f; color: #fff; }
.start { width: 48px; }
.task-search { width: 344px; display: flex; align-items: center; gap: 12px; padding-left: 11px; background: #f2f2f2; border: 1px solid #b0b0b0; color: #333; font-size: 14px; }
.task-apps { display: flex; }
.task-apps button { flex: none; width: 48px; }
.task-apps .focus { background: linear-gradient(90deg, #4a4a4a 43px, #2c2c2c 43px, #2c2c2c 44px, #444 44px); border-bottom: 2px solid #76b9ed; }
.task-apps .open { background: linear-gradient(#76b9ed, #76b9ed) center bottom / 39px 2px no-repeat; }
.tray { display: flex; align-items: center; gap: 8px; margin-left: auto; padding-right: 17px; }
.tray path, .tray circle { fill: none; stroke: #fff; stroke-width: 1.2; }
.tray .bubble { fill: #fff; stroke: none; }
.tray .lines { stroke: #222; }
.lang-code, time { font-family: "Noto Sans", sans-serif; font-size: 11px; }
time { text-align: center; line-height: 18px; width: 60px; }
.notes { position: relative; margin-left: 6px; width: 26px; height: 24px; align-items: flex-start; justify-content: flex-start; }
.badge { position: absolute; right: 0; bottom: 0; width: 16px; height: 16px; border-radius: 50%; background: #333; border: 1px solid #888; font-size: 11px; line-height: 14px; }
```
